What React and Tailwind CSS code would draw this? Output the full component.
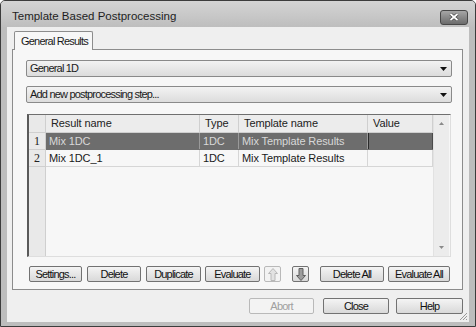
import React from 'react'

const ui = "font-['Liberation_Sans',Arial,sans-serif] text-[11px] tracking-[-0.8px] leading-none"
const grid = "font-['Liberation_Sans',Arial,sans-serif] text-[11px] tracking-[-0.1px] leading-none"

function Btn({ children, className = '', disabled }) {
  return (
    <div
      className={`flex items-center justify-center h-[16px] rounded-[2px] border ${ui} ${
        disabled
          ? 'border-[#b9b9b9] text-[#a0a0a0] bg-[#f3f3f3]'
          : 'border-[#727272] text-[#111] bg-linear-to-b from-[#f4f4f4] to-[#d9d9d9]'
      } ${className}`}
    >
      {children}
    </div>
  )
}

function Combo({ label }) {
  return (
    <div className="flex items-center h-[17px] rounded-[2px] border border-[#8a8a8a] bg-linear-to-b from-[#f3f3f3] to-[#dcdcdc] pl-[3px] pr-[4px]">
      <span className={`flex-1 text-[#1a1a1a] ${ui}`}>{label}</span>
      <svg width="7" height="4" viewBox="0 0 7 4">
        <path d="M0 0 H7 L3.5 4 Z" fill="#111" />
      </svg>
    </div>
  )
}

function Arrow({ down, disabled }) {
  return (
    <svg width="10" height="13" viewBox="0 0 10 13" className={down ? 'rotate-180' : ''}>
      <path
        d="M5 0.5 L9.5 5.5 H7 V12.5 H3 V5.5 H0.5 Z"
        fill={disabled ? '#e2e2e2' : '#9c9c9c'}
        stroke={disabled ? '#b8b8b8' : '#5e5e5e'}
        strokeWidth="1"
      />
    </svg>
  )
}

const cols = [
  { name: 'Result name', w: 'w-[154px]' },
  { name: 'Type', w: 'w-[39px]' },
  { name: 'Template name', w: 'w-[129px]' },
  { name: 'Value', w: 'w-[65px]' },
]

const rows = [
  ['Mix 1DC', '1DC', 'Mix Template Results', ''],
  ['Mix 1DC_1', '1DC', 'Mix Template Results', ''],
]

function Table() {
  return (
    <div className="flex h-[143px] mx-[1px] border-t border-l-2 border-t-[#6f6f6f] border-l-[#5a5a5a] border-r border-b border-r-[#dedede] border-b-[#dedede] bg-[#f7f7f7]">
      <div className="w-[17px] flex flex-col bg-[#e9e9e9] border-r border-[#cfcfcf]">
        <div className="h-[18px] border-b border-[#cfcfcf]" />
        {rows.map((r, i) => (
          <div
            key={i}
            className="h-[17px] flex items-center justify-center border-b border-[#cfcfcf] text-[12px] text-[#222] font-['Liberation_Serif',serif]"
          >
            {i + 1}
          </div>
        ))}
      </div>
      <div className="flex flex-col">
        <div className="flex h-[18px] bg-[#ececec] border-b border-[#cfcfcf]">
          {cols.map((c) => (
            <div key={c.name} className={`${c.w} flex items-center pl-[5px] border-r border-[#cfcfcf] text-[#222] ${grid}`}>
              {c.name}
            </div>
          ))}
        </div>
        {rows.map((r, i) => (
          <div
            key={i}
            className={`flex h-[17px] border-b ${i === 0 ? 'bg-[#6d6d6d] border-[#6d6d6d]' : 'bg-[#f7f7f7] border-[#d6d6d6]'}`}
          >
            {r.map((v, j) => (
              <div
                key={j}
                className={`${cols[j].w} flex items-center pl-[3px] border-r ${grid} ${
                  i === 0
                    ? j === 3
                      ? 'border-[#4a4a4a] border-l border-l-[#2a2a2a] text-[#d8d8d8]'
                      : 'border-[#9a9a9a] text-[#d8d8d8]'
                    : 'border-[#d6d6d6] text-[#1a1a1a]'
                }`}
              >
                {v}
              </div>
            ))}
          </div>
        ))}
      </div>
      <div className="w-[16px] h-[141px] flex flex-col items-center justify-between py-[7px] bg-[#ececec] border-l border-[#e2e2e2]">
        <svg width="5" height="3" viewBox="0 0 5 3">
          <path d="M0 3 L2.5 0 L5 3 Z" fill="#8a8a8a" />
        </svg>
        <svg width="5" height="3" viewBox="0 0 5 3">
          <path d="M0 0 H5 L2.5 3 Z" fill="#8a8a8a" />
        </svg>
      </div>
    </div>
  )
}

export default function App() {
  return (
    <div className="w-[476px] h-[327px] flex flex-col bg-[#bdbdbd] border border-[#3c3c3c] rounded-t-[5px] overflow-hidden">
      <div className="h-[26px] flex items-center pt-[6px] pl-[11px] pr-[7px] bg-linear-to-b from-[#d4d4d4] to-[#bebebe]">
        <span className="flex-1 font-['Liberation_Sans',Arial,sans-serif] text-[11.5px] text-[#1e1e1e] leading-none">
          Template Based Postprocessing
        </span>
        <div className="w-[28px] h-[15px] flex items-center justify-center rounded-[3px] border border-[#474747] bg-linear-to-b from-[#a6a6a6] to-[#6c6c6c]">
          <svg width="10" height="8" viewBox="0 0 10 8">
            <path d="M1.5 1 L8.5 7 M8.5 1 L1.5 7" stroke="#3a3a3a" strokeWidth="3" />
            <path d="M1.5 1 L8.5 7 M8.5 1 L1.5 7" stroke="#fff" strokeWidth="1.8" />
          </svg>
        </div>
      </div>

      <div className="relative h-[295px] mx-[6px] bg-[#efefef] pt-[4px] pl-[5px] pr-[6px]">
        <div className="relative z-10 -mb-px ml-[2px] w-[79px] h-[19px] flex items-center pl-[6px] border border-b-0 border-[#8c8c8c] rounded-t-[2px] bg-[#f7f7f7]">
          <span className={`text-[#1a1a1a] ${ui}`}>General Results</span>
        </div>
        <div className="h-[241px] border border-[#8c8c8c] bg-[#f7f7f7] pt-[10px] pl-[13px] pr-[10px]">
          <Combo label="General 1D" />
          <div className="mt-[9px]">
            <Combo label="Add new postprocessing step..." />
          </div>
          <div className="mt-[11px]">
            <Table />
          </div>
          <div className="flex mt-[9px] pl-[3px]">
            <Btn className="w-[53px]">Settings...</Btn>
            <Btn className="w-[54px] ml-[5px]">Delete</Btn>
            <Btn className="w-[55px] ml-[5px]">Duplicate</Btn>
            <Btn className="w-[55px] ml-[4px]">Evaluate</Btn>
            <Btn className="w-[17px] ml-[4px]" disabled>
              <Arrow disabled />
            </Btn>
            <Btn className="w-[17px] ml-[11px]">
              <Arrow down />
            </Btn>
            <Btn className="w-[64px] ml-[11px]">Delete All</Btn>
            <Btn className="w-[62px] ml-[4px]">Evaluate All</Btn>
          </div>
        </div>
        <div className="flex justify-end mt-[8px]">
          <Btn className="w-[65px]" disabled>Abort</Btn>
          <Btn className="w-[66px] ml-[9px]">Close</Btn>
          <Btn className="w-[67px] ml-[7px]">Help</Btn>
        </div>
        <svg width="9" height="9" viewBox="0 0 9 9" className="absolute right-[1px] bottom-[1px]">
          <path d="M8 1 L1 8 M8 4 L4 8 M8 7 L7 8" stroke="#9a9a9a" strokeWidth="1" />
        </svg>
      </div>
    </div>
  )
}
